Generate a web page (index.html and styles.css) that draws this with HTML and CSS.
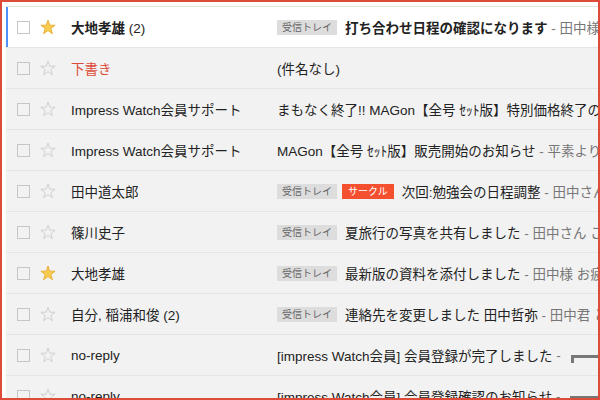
FILE: index.html
```html
<!DOCTYPE html>
<html lang="ja">
<head>
<meta charset="utf-8">
<title>受信トレイ</title>
<link rel="stylesheet" href="styles.css">
</head>
<body>
<div class="frame">
  <div class="list">
    <div class="row unread selected">
      <span class="check"></span>
      <svg class="star on" viewBox="0 0 16 16"><polygon points="8,1.1 9.76,6.17 15.13,6.28 10.85,9.53 12.41,14.67 8,11.6 3.59,14.67 5.15,9.53 0.87,6.28 6.24,6.17"/></svg>
      <span class="sender">大地孝雄 <span class="count">(2)</span></span>
      <span class="subject"><span class="tag">受信トレイ</span><span class="title">打ち合わせ日程の確認になります</span><span class="snippet"> - 田中様 いつもお世話になっております</span></span>
    </div>
    <div class="row">
      <span class="check"></span>
      <svg class="star" viewBox="0 0 16 16"><polygon points="8,1.1 9.76,6.17 15.13,6.28 10.85,9.53 12.41,14.67 8,11.6 3.59,14.67 5.15,9.53 0.87,6.28 6.24,6.17"/></svg>
      <span class="sender draft">下書き</span>
      <span class="subject"><span class="title">(件名なし)</span></span>
    </div>
    <div class="row">
      <span class="check"></span>
      <svg class="star" viewBox="0 0 16 16"><polygon points="8,1.1 9.76,6.17 15.13,6.28 10.85,9.53 12.41,14.67 8,11.6 3.59,14.67 5.15,9.53 0.87,6.28 6.24,6.17"/></svg>
      <span class="sender">Impress Watch会員サポート</span>
      <span class="subject"><span class="title">まもなく終了!! MAGon【全号 ｾｯﾄ版】特別価格終了のお知らせ</span></span>
    </div>
    <div class="row">
      <span class="check"></span>
      <svg class="star" viewBox="0 0 16 16"><polygon points="8,1.1 9.76,6.17 15.13,6.28 10.85,9.53 12.41,14.67 8,11.6 3.59,14.67 5.15,9.53 0.87,6.28 6.24,6.17"/></svg>
      <span class="sender">Impress Watch会員サポート</span>
      <span class="subject"><span class="title">MAGon【全号 ｾｯﾄ版】販売開始のお知らせ</span><span class="snippet"> - 平素よりご利用いただき</span></span>
    </div>
    <div class="row">
      <span class="check"></span>
      <svg class="star" viewBox="0 0 16 16"><polygon points="8,1.1 9.76,6.17 15.13,6.28 10.85,9.53 12.41,14.67 8,11.6 3.59,14.67 5.15,9.53 0.87,6.28 6.24,6.17"/></svg>
      <span class="sender">田中道太郎</span>
      <span class="subject"><span class="tag">受信トレイ</span><span class="tag circle">サークル</span><span class="title">次回:勉強会の日程調整</span><span class="snippet"> - 田中さん</span></span>
    </div>
    <div class="row">
      <span class="check"></span>
      <svg class="star" viewBox="0 0 16 16"><polygon points="8,1.1 9.76,6.17 15.13,6.28 10.85,9.53 12.41,14.67 8,11.6 3.59,14.67 5.15,9.53 0.87,6.28 6.24,6.17"/></svg>
      <span class="sender">篠川史子</span>
      <span class="subject"><span class="tag">受信トレイ</span><span class="title">夏旅行の写真を共有しました</span><span class="snippet"> - 田中さん この前の</span></span>
    </div>
    <div class="row">
      <span class="check"></span>
      <svg class="star on" viewBox="0 0 16 16"><polygon points="8,1.1 9.76,6.17 15.13,6.28 10.85,9.53 12.41,14.67 8,11.6 3.59,14.67 5.15,9.53 0.87,6.28 6.24,6.17"/></svg>
      <span class="sender">大地孝雄</span>
      <span class="subject"><span class="tag">受信トレイ</span><span class="title">最新版の資料を添付しました</span><span class="snippet"> - 田中様 お疲れ様です</span></span>
    </div>
    <div class="row">
      <span class="check"></span>
      <svg class="star" viewBox="0 0 16 16"><polygon points="8,1.1 9.76,6.17 15.13,6.28 10.85,9.53 12.41,14.67 8,11.6 3.59,14.67 5.15,9.53 0.87,6.28 6.24,6.17"/></svg>
      <span class="sender">自分, 稲浦和俊 <span class="count">(2)</span></span>
      <span class="subject"><span class="tag">受信トレイ</span><span class="title">連絡先を変更しました 田中哲弥</span><span class="snippet"> - 田中君 とりあえず</span></span>
    </div>
    <div class="row">
      <span class="check"></span>
      <svg class="star" viewBox="0 0 16 16"><polygon points="8,1.1 9.76,6.17 15.13,6.28 10.85,9.53 12.41,14.67 8,11.6 3.59,14.67 5.15,9.53 0.87,6.28 6.24,6.17"/></svg>
      <span class="sender">no-reply</span>
      <span class="subject"><span class="title">[impress Watch会員] 会員登録が完了しました</span><span class="snippet"> - </span><span class="frag"></span></span>
    </div>
    <div class="row">
      <span class="check"></span>
      <svg class="star" viewBox="0 0 16 16"><polygon points="8,1.1 9.76,6.17 15.13,6.28 10.85,9.53 12.41,14.67 8,11.6 3.59,14.67 5.15,9.53 0.87,6.28 6.24,6.17"/></svg>
      <span class="sender">no-reply</span>
      <span class="subject"><span class="title">[impress Watch会員] 会員登録確認のお知らせ</span><span class="snippet"> - </span><span class="frag"></span></span>
    </div>
  </div>
</div>
</body>
</html>
```

FILE: styles.css
```css
* { box-sizing: border-box; }
html, body { margin: 0; padding: 0; background: #fff; }
body {
  font-family: "Liberation Sans", "Noto Sans CJK JP", sans-serif;
  font-size: 13.5px;
  color: #222;
}
.frame {
  width: 600px;
  height: 400px;
  border: 2px solid #dd4b39;
  padding: 4px 0 0 4px;
  overflow: hidden;
}
.list {
  border-top: 1px solid #e5e5e5;
}
.row {
  display: flex;
  align-items: center;
  height: 41px;
  border-bottom: 1px solid #e5e5e5;
  background: #f2f2f2;
  padding-left: 11px;
  white-space: nowrap;
}
.row.unread { background: #fff; font-weight: bold; }
.row.selected { box-shadow: inset 2px 0 0 #4d90fe; }
.check {
  flex: none;
  width: 13px;
  height: 13px;
  border: 1px solid #c6c6c6;
  background: transparent;
}
.star {
  flex: none;
  width: 16px;
  height: 16px;
  margin-left: 10px;
  fill: none;
  stroke: #d0d0d0;
  stroke-width: 1;
  stroke-linejoin: round;
}
.star.on { fill: #f7cb4d; stroke: #e9b13b; }
.sender {
  flex: none;
  width: 206px;
  margin-left: 15px;
  overflow: hidden;
}
.sender.draft { color: #dd4b39; }
.count { font-weight: normal; }
.subject {
  flex: none;
  display: flex;
  align-items: center;
}
.tag {
  display: inline-block;
  height: 15px;
  line-height: 15px;
  padding: 0 5px;
  font-size: 10px;
  font-weight: normal;
  background: #ddd;
  color: #666;
  margin-right: 8px;
}
.tag.circle {
  background: #f4502f;
  color: #fff;
  padding: 0 6px;
  margin-left: -3px;
}
.snippet { color: #777; font-weight: normal; white-space: pre; }
.frag {
  display: inline-block;
  width: 40px;
  height: 8px;
  margin-left: 6px;
  margin-top: 7px;
  border-top: 3px solid #777;
  border-left: 3px solid #777;
}
```
